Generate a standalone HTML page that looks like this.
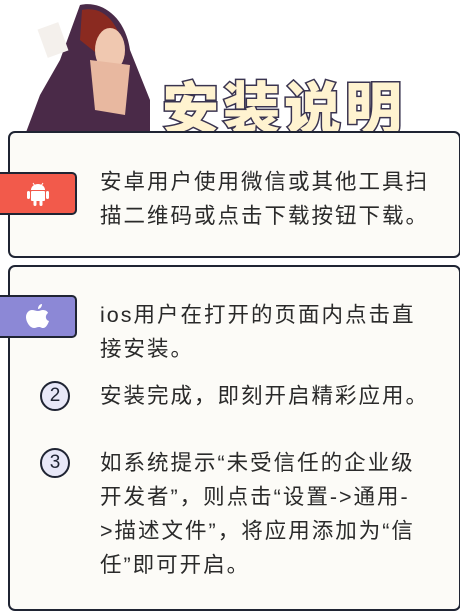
<!DOCTYPE html><html><head><meta charset="utf-8"><style>
body{margin:0;width:460px;height:611px;background:#fff;position:relative;overflow:hidden;font-family:"Liberation Sans","Noto Sans CJK SC",sans-serif}
.box{position:absolute;left:8px;width:449px;border:2px solid #1f2433;border-radius:7px;background:#fcfbf7}
.tag{position:absolute;left:0;width:75px;height:39px;border:2px solid #1f2433;border-left:none;border-radius:0 5px 5px 0}
.t{position:absolute;left:100px;font-size:21.5px;letter-spacing:2px;line-height:34px;color:#2a2a2a;width:360px;white-space:nowrap}
.n{position:absolute;left:40px;width:26px;height:26px;border:2px solid #1f2433;border-radius:50%;background:#e8e8f8;font-size:19px;text-align:center;line-height:26px;color:#1f2433}
.title{position:absolute;left:162px;top:64px;font-size:57px;font-weight:900;color:#fff3d0;-webkit-text-stroke:3px #3a3450;letter-spacing:4px;font-family:"Noto Sans CJK SC",sans-serif;paint-order:stroke fill}
</style></head><body>
<svg style="position:absolute;left:20px;top:0" width="130" height="135"><path d="M60 5 C80 0 105 15 110 50 L130 100 L140 135 L5 135 L20 95 L40 60 Z" fill="#4a2a48"/><path d="M62 10 C85 5 100 25 105 55 L85 60 L60 40 Z" fill="#8a2a20"/><ellipse cx="90" cy="50" rx="15" ry="22" fill="#f0c8b0"/><path d="M70 60 L110 65 L105 115 L75 110 Z" fill="#e8b8a0"/><rect x="22" y="25" width="22" height="30" fill="#f4f0ec" transform="rotate(-20 33 40)"/></svg>
<div class="title">安装说明</div>
<div class="box" style="top:131px;height:123px"></div>
<div class="tag" style="top:172px;background:#f25a4b"><svg width="24" height="26" style="position:absolute;left:26px;top:7px" viewBox="0 0 24 26" fill="#fff"><path d="M5 9a7 6 0 0 1 14 0z"/><rect x="5" y="10" width="14" height="10" rx="1"/><rect x="1" y="10" width="3" height="8" rx="1.5"/><rect x="20" y="10" width="3" height="8" rx="1.5"/><rect x="7.5" y="19" width="3" height="6" rx="1.5"/><rect x="13.5" y="19" width="3" height="6" rx="1.5"/><line x1="7" y1="2" x2="9" y2="5" stroke="#fff"/><line x1="17" y1="2" x2="15" y2="5" stroke="#fff"/></svg></div>
<div class="t" style="top:165px">安卓用户使用微信或其他工具扫<br>描二维码或点击下载按钮下载。</div>
<div class="box" style="top:265px;height:342px"></div>
<div class="tag" style="top:295px;background:#8c88d6"><svg width="26" height="28" style="position:absolute;left:25px;top:5px" viewBox="0 0 26 28" fill="#fff"><path d="M17 2c0 3-2 5-4 5 0-3 2-5 4-5zM13 9c2 0 3-1 5-1 3 0 5 2 5 3-3 2-3 7 1 8-1 3-3 7-6 7-2 0-2-1-4-1s-3 1-5 1C5 26 1 20 1 15c0-4 3-7 6-7 2 0 4 1 6 1z"/></svg></div>
<div class="t" style="top:298px">ios用户在打开的页面内点击直<br>接安装。</div>
<div class="n" style="top:381px">2</div>
<div class="t" style="top:379px">安装完成，即刻开启精彩应用。</div>
<div class="n" style="top:448px">3</div>
<div class="t" style="top:446px">如系统提示“未受信任的企业级<br>开发者”，则点击“设置->通用-<br>>描述文件”，将应用添加为“信<br>任”即可开启。</div>
</body></html>
